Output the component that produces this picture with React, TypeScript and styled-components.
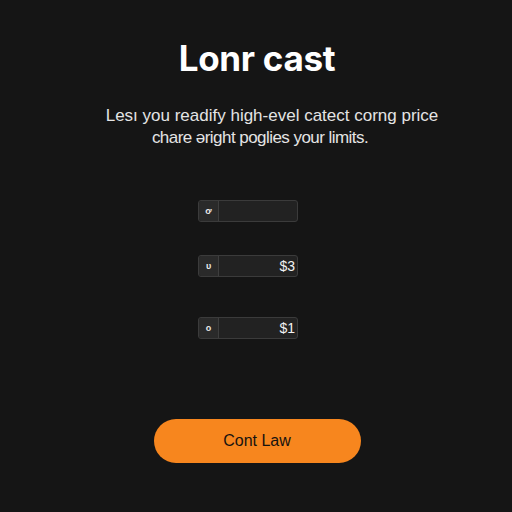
import React from "react";
import styled, { createGlobalStyle } from "styled-components";

const Global = createGlobalStyle`
  html, body { margin: 0; padding: 0; background: #151515; }
  body { width: 512px; height: 512px; overflow: hidden; }
`;

const Page = styled.div`
  width: 512px;
  height: 512px;
  box-sizing: border-box;
  padding-top: 38px;
  display: flex;
  flex-direction: column;
  align-items: center;
  background: #151515;
  font-family: "Liberation Sans", Arial, sans-serif;
`;

const Title = styled.h1`
  margin: 0 0 0 2px;
  font-family: Inter, "Liberation Sans", sans-serif;
  font-weight: 700;
  font-size: 35px;
  line-height: 40px;
  color: #ffffff;
  letter-spacing: -0.3px;
`;

const Subtitle = styled.div`
  margin-top: 27px;
  width: 400px;
  display: flex;
  flex-direction: column;
  align-items: center;
  font-size: 17px;
  line-height: 22px;
  color: #e4e4e4;
`;

const Line = styled.span<{ $shift: number; $tight?: boolean }>`
  margin-left: ${(p) => p.$shift}px;
  letter-spacing: ${(p) => (p.$tight ? "-0.55px" : "0")};
  white-space: nowrap;
`;

const Fields = styled.div`
  margin-top: 51px;
  margin-right: 16px;
  display: flex;
  flex-direction: column;
  align-items: center;
`;

const Field = styled.div<{ $gap: number }>`
  margin-top: ${(p) => p.$gap}px;
  width: 100px;
  height: 22px;
  box-sizing: border-box;
  display: flex;
  border: 1px solid #3b3b3b;
  border-radius: 3px;
  background: #222222;
  overflow: hidden;
`;

const Prefix = styled.div`
  width: 19px;
  display: flex;
  align-items: center;
  justify-content: center;
  background: #2a2a2a;
  border-right: 1px solid #3e3e3e;
  color: #e8e8e8;
  font-size: 9px;
  font-weight: 700;
`;

const Value = styled.div`
  flex: 1;
  display: flex;
  align-items: center;
  justify-content: flex-end;
  padding-right: 2px;
  color: #f2f2f2;
  font-size: 14px;
`;

const Button = styled.button`
  margin-top: 80px;
  margin-left: 2px;
  width: 207px;
  height: 44px;
  border: none;
  border-radius: 22px;
  background: #f7861e;
  color: #17130f;
  font-family: "Liberation Sans", Arial, sans-serif;
  font-size: 16px;
  cursor: pointer;
`;

const fields = [
  { icon: "ơ", value: "", gap: 0 },
  { icon: "υ", value: "$3", gap: 33 },
  { icon: "o", value: "$1", gap: 40 },
];

export default function App() {
  return (
    <>
      <Global />
      <Page>
        <Title>Lonr cast</Title>
        <Subtitle>
          <Line $shift={32}>Lesı you readify high-evel catect corng price</Line>
          <Line $shift={8} $tight>chare əright poglies your limits.</Line>
        </Subtitle>
        <Fields>
          {fields.map((f, i) => (
            <Field key={i} $gap={f.gap}>
              <Prefix>{f.icon}</Prefix>
              <Value>{f.value}</Value>
            </Field>
          ))}
        </Fields>
        <Button>Cont Law</Button>
      </Page>
    </>
  );
}
